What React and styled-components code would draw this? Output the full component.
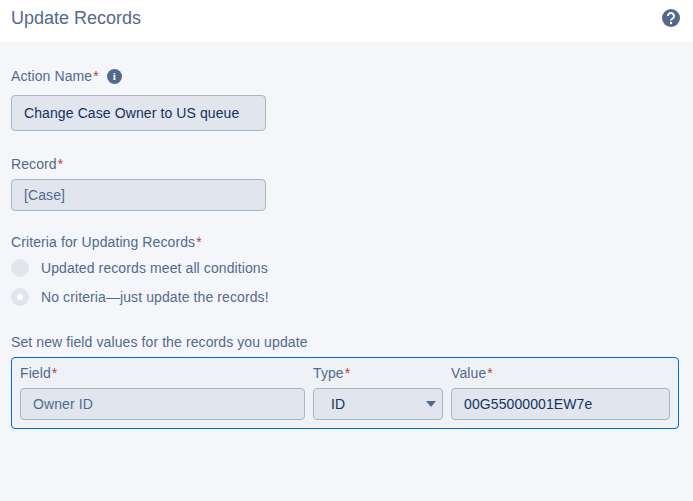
import React from 'react';
import styled, { createGlobalStyle } from 'styled-components';

const Global = createGlobalStyle`
  html, body { margin: 0; padding: 0; background: #f4f6f9; }
  * { box-sizing: border-box; }
`;
const Page = styled.div`width: 693px; height: 501px; overflow: hidden; background: #f4f6f9; font-family: "Liberation Sans", Arial, sans-serif; font-size: 14px; letter-spacing: 0.1px; color: #54698d;`;
const Header = styled.header`height: 42px; background: #fff; display: flex; align-items: center; justify-content: space-between; padding: 0 13px 6px 11px;`;
const Title = styled.h1`margin: 0; font-size: 18px; font-weight: 400; letter-spacing: 0; color: #54698d;`;
const Body = styled.main`padding: 24px 14px 0 11px; display: flex; flex-direction: column;`;
const Label = styled.div`display: flex; align-items: center; height: 20px; line-height: 20px; color: #54698d;`;
const Star = styled.span`color: #c23934; margin-left: 1px;`;
const Info = styled.span`width: 15px; height: 15px; border-radius: 50%; background: #54698d; color: #fff; font: 700 11px/15px "Liberation Serif", serif; text-align: center; margin-left: 8px;`;
const Input = styled.div`height: ${p => p.$h || 32}px; width: ${p => p.$w ? p.$w + 'px' : '100%'}; background: #e0e5ee; border: 1px solid #a8b7c7; border-radius: 4px; display: flex; align-items: center; padding: 0 ${p => p.$select ? 6 : 12}px 0 ${p => p.$select ? 17 : 12}px; color: ${p => p.$dark ? '#16325c' : '#54698d'}; margin-top: ${p => p.$mt ?? 0}px;`;
const Gap = styled.div`height: ${p => p.$h}px;`;
const Radio = styled.div`display: flex; align-items: center; gap: 12px; height: 20px; margin-top: ${p => p.$mt}px;`;
const Dot = styled.span`width: 18px; height: 18px; border-radius: 50%; background: #e0e5ee; display: flex; align-items: center; justify-content: center; &::after { content: ""; display: ${p => p.$on ? 'block' : 'none'}; width: 6px; height: 6px; border-radius: 50%; background: #fff; }`;
const Row = styled.div`margin-top: 5px; border: 1px solid #006dcc; border-radius: 4px; height: 72px; padding: 5px 8px 0; background: #eef1f6; display: grid; grid-template-columns: 285px 130px 219px; column-gap: 8px;`;
const Col = styled.div`display: flex; flex-direction: column;`;
const Caret = styled.span`width: 0; height: 0; border-left: 5px solid transparent; border-right: 5px solid transparent; border-top: 6px solid #54698d; margin-left: auto;`;

export default function App() {
  const Req = ({ children }) => <Label>{children}<Star>*</Star></Label>;
  return (
    <Page>
      <Global />
      <Header>
        <Title>Update Records</Title>
        <svg width="18" height="18" viewBox="0 0 18 18"><circle cx="9" cy="9" r="9" fill="#54698d" /><path d="M6 7a3 3 0 1 1 4.6 2.5C9.5 10.200 9 10.600 9 11.500" fill="none" stroke="#fff" strokeWidth="2" /><circle cx="9" cy="14" r="1.200" fill="#fff" /></svg>
      </Header>
      <Body>
        <Label>Action Name<Star>*</Star><Info>i</Info></Label>
        <Input $h={36} $w={255} $dark $mt={9}>Change Case Owner to US queue</Input>
        <Gap $h={23} />
        <Req>Record</Req>
        <Input $w={255} $mt={5}>[Case]</Input>
        <Gap $h={21} />
        <Req>Criteria for Updating Records</Req>
        <Radio $mt={6}><Dot />Updated records meet all conditions</Radio>
        <Radio $mt={9}><Dot $on />No criteria—just update the records!</Radio>
        <Gap $h={25} />
        <Label>Set new field values for the records you update</Label>
        <Row>
          <Col><Req>Field</Req><Input $mt={5}>Owner ID</Input></Col>
          <Col><Req>Type</Req><Input $mt={5} $select $dark>ID<Caret /></Input></Col>
          <Col><Req>Value</Req><Input $mt={5} $dark>00G55000001EW7e</Input></Col>
        </Row>
      </Body>
    </Page>
  );
}
